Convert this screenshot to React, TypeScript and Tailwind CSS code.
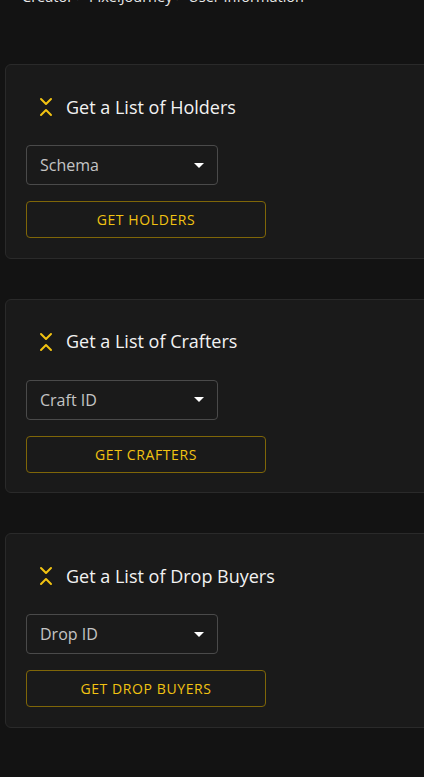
import { ChevronsDownUp } from "lucide-react";

const sections = [
  { title: "Get a List of Holders", field: "Schema", action: "GET HOLDERS" },
  { title: "Get a List of Crafters", field: "Craft ID", action: "GET CRAFTERS" },
  { title: "Get a List of Drop Buyers", field: "Drop ID", action: "GET DROP BUYERS" },
];

function Section({ title, field, action }: { title: string; field: string; action: string }) {
  return (
    <div className="ml-[5px] w-[440px] rounded-[6px] border border-[#2a2a2a] bg-[#1a1a1a] px-5 pt-[26px] pb-[19.5px]">
      <div className="flex h-8 items-center">
        <ChevronsDownUp className="ml-2 h-6 w-6 text-[#f2c312]" strokeWidth={2} />
        <h2 className="ml-2 text-[18px] font-normal text-[#f2f2f2]">{title}</h2>
      </div>
      <div className="mt-[22px] flex h-10 w-[192px] items-center justify-between rounded-[4px] border border-[#4a4a4a] pl-[13px] pr-[12px]">
        <span className="text-[16px] text-[#c4c4c4]">{field}</span>
        <svg width="10" height="5" viewBox="0 0 10 5" className="mr-[1px]">
          <path d="M0 0h10L5 5z" fill="#ffffff" />
        </svg>
      </div>
      <button className="mt-4 flex h-[37px] w-[240px] items-center justify-center rounded-[4px] border border-[#7f6608] text-[14px] tracking-[0.6px] text-[#f2c312]">
        {action}
      </button>
    </div>
  );
}

export default function App() {
  return (
    <div className="min-h-[777px] overflow-hidden bg-[#131313]" style={{ fontFamily: "'Open Sans', sans-serif" }}>
      <div className="-mt-[13px] pl-[22px] text-[14.5px] leading-[20px] text-[#e8e8e8]">
        Creator &gt; PixelJourney &gt; User Information
      </div>
      <div className="mt-[57px] flex flex-col gap-10">
        {sections.map((s) => (
          <Section key={s.title} {...s} />
        ))}
      </div>
    </div>
  );
}
